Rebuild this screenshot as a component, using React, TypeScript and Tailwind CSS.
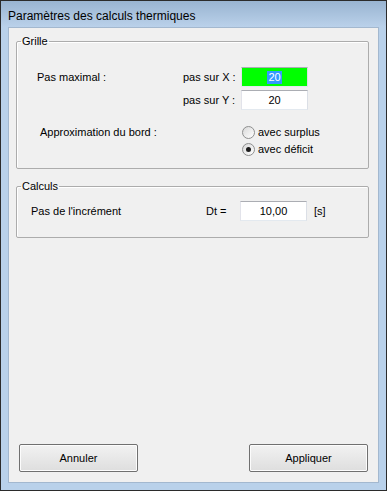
import React from 'react'

const font = { fontFamily: '"Liberation Sans", Arial, sans-serif' }

function Radio({ checked }: { checked?: boolean }) {
  return (
    <div className="w-[13px] h-[13px] rounded-full border border-[#8e8f8f] bg-gradient-to-br from-[#d9d9d9] to-[#ffffff] flex items-center justify-center">
      {checked && <div className="w-[5px] h-[5px] rounded-full bg-[#1c1c1c]" />}
    </div>
  )
}

function Field({ children, green }: { children: React.ReactNode; green?: boolean }) {
  return (
    <div
      className={`w-[67px] h-[20px] flex items-center justify-center border border-t-[#abadb3] border-l-[#e2e3ea] border-r-[#dbdfe6] border-b-[#e3e9ef] ${
        green ? 'bg-[#00ff00]' : 'bg-white'
      }`}
    >
      {children}
    </div>
  )
}

function Button({ label }: { label: string }) {
  return (
    <button className="w-[119px] h-[28px] rounded-[2px] border border-[#707070] bg-gradient-to-b from-[#f2f2f2] to-[#dedede] text-[11px] text-black shadow-[inset_0_0_0_1px_#fcfcfc]">
      {label}
    </button>
  )
}

export default function App() {
  return (
    <div className="w-[387px] h-[491px] border border-[#2b2b2b] bg-[#b9d1ea] flex flex-col text-black" style={font}>
      {/* title bar */}
      <div className="h-[26px] bg-gradient-to-b from-[#99b4d1] to-[#bad1ea] pl-[7px] pt-[8px] text-[12px] leading-[15px]">
        Paramètres des calculs thermiques
      </div>

      {/* client area */}
      <div className="flex-1 mx-[7px] mb-[7px] border border-[#a3b8cf] bg-[#f0f0f0] flex flex-col text-[11px] leading-[13px]">
        {/* Grille */}
        <fieldset className="ml-[7px] mt-[7px] w-[353px] border border-[#acacac] rounded-[2px] pb-[11px] shadow-[inset_1px_1px_0_#ffffff]">
          <legend className="ml-[4px] px-[1px]">Grille</legend>

          <div className="mt-[19px] flex items-center h-[20px] pl-[20px]">
            <span className="w-[146px]">Pas maximal :</span>
            <span className="w-[58px]">pas sur X :</span>
            <Field green>
              <span className="bg-[#3399ff] text-white px-[1px]">20</span>
            </Field>
          </div>
          <div className="mt-[3px] flex items-center h-[20px] pl-[166px]">
            <span className="w-[58px]">pas sur Y :</span>
            <Field>20</Field>
          </div>

          <div className="mt-[14px] flex items-center h-[16px] pl-[23px]">
            <span className="w-[202px]">Approximation du bord :</span>
            <Radio />
            <span className="ml-[3px]">avec surplus</span>
          </div>
          <div className="mt-[1px] flex items-center h-[16px] pl-[225px]">
            <Radio checked />
            <span className="ml-[3px]">avec déficit</span>
          </div>
        </fieldset>

        {/* Calculs */}
        <fieldset className="ml-[7px] mt-[11px] w-[353px] border border-[#acacac] rounded-[2px] pb-[16px] shadow-[inset_1px_1px_0_#ffffff]">
          <legend className="ml-[4px] px-[1px]">Calculs</legend>
          <div className="mt-[8px] flex items-center h-[20px] pl-[14px]">
            <span className="w-[175px]">Pas de l'incrément</span>
            <span className="w-[34px]">Dt =</span>
            <Field>10,00</Field>
            <span className="ml-[7px]">[s]</span>
          </div>
        </fieldset>

        {/* buttons */}
        <div className="mt-auto mb-[10px] flex justify-between px-[10px]">
          <Button label="Annuler" />
          <Button label="Appliquer" />
        </div>
      </div>
    </div>
  )
}
